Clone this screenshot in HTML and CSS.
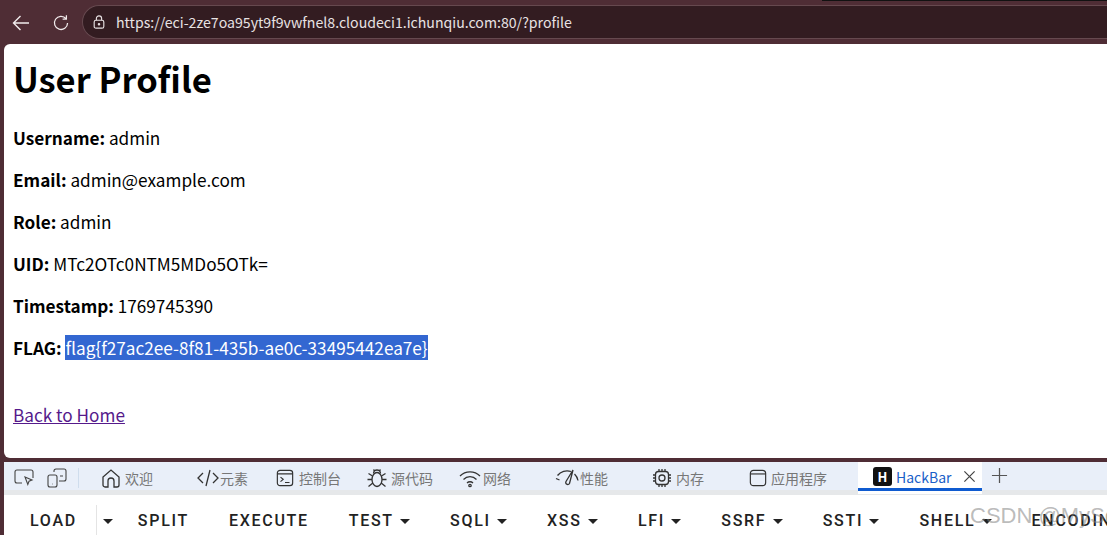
FILE: index.html
```html
<!DOCTYPE html>
<html lang="en">
<head>
<meta charset="UTF-8">
<title>User Profile</title>
<link rel="stylesheet" href="styles.css">
</head>
<body>
    <div class="topline"></div>
    <header class="toolbar">
        <svg class="nav-icon back" viewBox="0 0 20 20"><path d="M18 10H2.500M9.500 3l-7 7 7 7"/></svg>
        <svg class="nav-icon reload" viewBox="0 0 20 20"><path d="M15.600 5.200A7.300 7.300 0 1 0 17.300 10M16 1.500v4.200h-4.200"/></svg>
        <div class="address">
            <svg class="lock" viewBox="0 0 16 16"><rect x="2.500" y="6" width="11" height="9" rx="2"/><path d="M5 6V4a3 3 0 0 1 6 0v2"/><circle cx="8" cy="10.500" r=".8"/></svg>
            <span>https://eci-2ze7oa95yt9f9vwfnel8.cloudeci1.ichunqiu.com:80/?profile</span>
        </div>
    </header>

    <main class="page">
        <h1>User Profile</h1>
        <p><strong>Username:</strong> admin</p>
        <p><strong>Email:</strong> admin@example.com</p>
        <p><strong>Role:</strong> admin</p>
        <p><strong>UID:</strong> MTc2OTc0NTM5MDo5OTk=</p>
        <p><strong>Timestamp:</strong> 1769745390</p>
        <p><strong>FLAG:</strong> <span class="selected">flag{f27ac2ee-8f81-435b-ae0c-33495442ea7e}</span></p>
        <a class="home-link" href="#">Back to Home</a>
    </main>

    <section class="devtools">
        <nav class="tabs">
            <svg class="tool-icon inspect" viewBox="0 0 20 20"><path d="M8 15H3a2 2 0 0 1-2-2V4a2 2 0 0 1 2-2h14a2 2 0 0 1 2 2v6"/><path d="M11 9l7 3-3 1.200-1.200 3.300z"/></svg>
            <svg class="tool-icon device" viewBox="0 0 20 20"><path d="M7 4V3a2 2 0 0 1 2-2h8a2 2 0 0 1 2 2v8a2 2 0 0 1-2 2h-5"/><rect x="1" y="7" width="9" height="12" rx="2"/><path d="M13 8h3M5 16h.5"/></svg>
            <span class="tool-divider"></span>
            <div class="tab first">
                <svg viewBox="0 0 20 20"><path d="M7 19H4a2 2 0 0 1-2-2V9l8-7 8 7v8a2 2 0 0 1-2 2h-3v-6a3 3 0 0 0-6 0z"/></svg>欢迎
            </div>
            <div class="tab wide">
                <svg class="code" viewBox="0 0 22 20"><path d="M6 5l-5 5 5 5M16 5l5 5-5 5M13 2L9 18"/></svg>元素
            </div>
            <div class="tab console">
                <svg class="narrow" viewBox="0 0 20 20"><rect x="1.500" y="1.500" width="17" height="17" rx="3"/><path d="M1.500 5.500h17M5 9l3 2.500-3 2.500M10 15h5"/></svg>控制台
            </div>
            <div class="tab">
                <svg viewBox="0 0 20 20"><ellipse cx="10" cy="11.500" rx="5" ry="7"/><path d="M6.500 5.500a3.500 3.500 0 0 1 7 0M6.500 1.500l1.500 2M13.500 1.500l-1.500 2M5.500 8L1.500 5.500M14.500 8l4-2.500M5 11.500H.5M15 11.500h4.500M5.800 15L1.500 18.500M14.200 15l4.300 3.500"/></svg>源代码
            </div>
            <div class="tab">
                <svg class="wifi" viewBox="0 0 22 20"><path d="M1 8a14 14 0 0 1 20 0M4.500 11.500a9 9 0 0 1 13 0M8 15a4.200 4.200 0 0 1 6 0"/><circle cx="11" cy="17.500" r="1.200"/></svg>网络
            </div>
            <div class="tab wide">
                <svg class="gauge" viewBox="0 0 24 20"><path d="M1 10.500l3.500 1.500M2.500 7.500A12 12 0 0 1 16 3.500M19.500 6a12 12 0 0 1 3.500 6.500M18 2l-7 11.500a2 2 0 0 0 3.500 2z"/></svg>性能
            </div>
            <div class="tab wide">
                <svg viewBox="0 0 20 20"><rect x="3.500" y="3.500" width="13" height="13" rx="3"/><circle cx="10" cy="10" r="3"/><path d="M7 1v2.500M10 1v2.500M13 1v2.500M7 16.500V19M10 16.500V19M13 16.500V19M1 7h2.500M1 10h2.500M1 13h2.500M16.500 7H19M16.500 10H19M16.500 13H19"/></svg>内存
            </div>
            <div class="tab wide app">
                <svg class="narrow" viewBox="0 0 20 20"><rect x="1.500" y="1.500" width="17" height="17" rx="3.500"/><path d="M1.500 5.500h17"/></svg>应用程序
            </div>
            <div class="tab active">
                <span class="hb-logo">H</span>HackBar
                <svg class="close" viewBox="0 0 14 14"><path d="M1.500 1.500l11 11M12.500 1.500l-11 11"/></svg>
            </div>
            <svg class="plus" viewBox="0 0 18 18"><path d="M9 1v16M1 9h16"/></svg>
        </nav>

        <div class="hackbar">
            <button class="hb-btn load">Load</button>
            <button class="hb-btn caret-only"><i class="caret"></i></button>
            <button class="hb-btn">Split</button>
            <button class="hb-btn">Execute</button>
            <button class="hb-btn">Test<i class="caret"></i></button>
            <button class="hb-btn">SQLi<i class="caret"></i></button>
            <button class="hb-btn">XSS<i class="caret"></i></button>
            <button class="hb-btn">LFI<i class="caret"></i></button>
            <button class="hb-btn">SSRF<i class="caret"></i></button>
            <button class="hb-btn">SSTI<i class="caret"></i></button>
            <button class="hb-btn">Shell<i class="caret"></i></button>
            <button class="hb-btn">Encoding</button>
        </div>
    </section>

    <div class="watermark">CSDN @MySec</div>
</body>
</html>
```

FILE: styles.css
```css
body {
    margin: 0;
    width: 1107px;
    height: 535px;
    overflow: hidden;
    position: relative;
    background-color: #4f2d35;
    font-family: "Noto Sans CJK SC", "Noto Sans", sans-serif;
}

.topline {
    height: 1px;
    margin-left: 822px;
    background-color: #111;
}

/* browser toolbar */
.toolbar {
    height: 43px;
    display: flex;
    align-items: center;
}

.nav-icon {
    width: 20px;
    height: 20px;
    fill: none;
    stroke: #f1ebec;
    stroke-width: 1.4;
}

.back {
    margin-left: 11px;
}

.reload {
    margin-left: 21px;
    width: 18px;
    height: 18px;
}

.address {
    align-self: flex-start;
    margin-left: 12px;
    margin-top: 4px;
    flex: 1;
    height: 34px;
    display: flex;
    align-items: center;
    box-sizing: border-box;
    padding-left: 9px;
    background-color: #331c21;
    border: 1px solid #66494f;
    border-right: none;
    border-radius: 17px 0 0 17px;
    color: #e8e2e3;
    font-size: 14.13px;
}

.lock {
    width: 14px;
    height: 14px;
    margin-right: 10px;
    fill: none;
    stroke: #e8e2e3;
    stroke-width: 1.3;
}

/* page */
.page {
    height: 414px;
    margin-left: 4px;
    box-sizing: border-box;
    padding: 12px 9px;
    background-color: #fff;
    border-radius: 6px 0 0 6px;
    color: #000;
    font-size: 17.2px;
}

h1 {
    margin: 0 0 24px;
    font-size: 34.500px;
    line-height: 44px;
    font-weight: 700;
}

p {
    margin: 0;
    height: 42px;
    line-height: 27px;
}

.selected {
    background-color: #3367d1;
    color: #fff;
}

.home-link {
    display: inline-block;
    margin-top: 26px;
    color: #551a8b;
}

/* devtools */
.devtools {
    position: absolute;
    left: 4px;
    right: 0;
    top: 462px;
    bottom: 0;
    background-color: #fff;
}

.tabs {
    height: 24px;
    padding-top: 4px;
    display: flex;
    align-items: center;
    background-color: #e9eff9;
    border-bottom: 5px solid #e6e8ea;
    color: #777;
    font-size: 14px;
}

.tool-icon {
    width: 20px;
    height: 20px;
    fill: none;
    stroke: #444;
    stroke-width: 1.1;
}

.inspect {
    margin-left: 10px;
}

.device {
    margin-left: 13px;
}

.tool-divider {
    width: 1px;
    height: 20px;
    margin-left: 11px;
    background-color: #cfdded;
}

.tab {
    display: flex;
    align-items: center;
    margin-left: 26px;
    white-space: nowrap;
}

.tab.first {
    margin-left: 22px;
}

.tab.wide {
    margin-left: 44px;
}

.tab.console {
    margin-left: 28px;
}

.tab.app {
    margin-left: 45px;
}

.tab svg {
    width: 20px;
    height: 20px;
    margin-right: 4px;
    fill: none;
    stroke: #333;
    stroke-width: 1.3;
}

.tab svg.narrow {
    width: 18px;
    height: 18px;
}

.tab.console svg {
    margin-right: 5px;
}

.tab svg.code {
    width: 22px;
    margin-right: 1px;
}

.tab svg.wifi {
    width: 22px;
    margin-right: 2px;
}

.tab svg.gauge {
    width: 24px;
    margin-right: 1px;
}

.tab.active {
    align-self: flex-start;
    margin-top: -4px;
    margin-left: 31px;
    width: 124px;
    height: 29px;
    box-sizing: border-box;
    padding-left: 15px;
    padding-top: 3px;
    background-color: #fff;
    border-bottom: 3px solid #0f5bd0;
    box-shadow: 0 3px 0 #fff;
    color: #1a5fc8;
}

.hb-logo {
    width: 19px;
    height: 19px;
    margin-right: 4px;
    background-color: #111;
    border-radius: 3px;
    color: #fff;
    font-size: 13px;
    font-weight: 700;
    line-height: 19px;
    text-align: center;
}

.tab svg.close {
    width: 13px;
    height: 13px;
    margin: 0 0 0 12px;
    stroke: #444;
}

.plus {
    width: 17px;
    height: 17px;
    margin-left: 9px;
    margin-top: -6px;
    fill: none;
    stroke: #555;
    stroke-width: 1.3;
}

/* hackbar row */
.hackbar {
    display: flex;
    align-items: center;
    height: 40px;
    padding-top: 5px;
    overflow: hidden;
}

.hb-btn {
    flex-shrink: 0;
    height: 30px;
    padding: 0 20px;
    border: none;
    background: none;
    color: #222;
    font-family: Roboto, sans-serif;
    font-size: 16px;
    font-weight: 500;
    letter-spacing: 1.7px;
    text-transform: uppercase;
}

.hb-btn.load {
    padding: 0 19px 0 26px;
    border-right: 1px solid #e4e4e4;
}

.hb-btn.caret-only {
    padding: 0 5px 0 6px;
}

.caret {
    display: inline-block;
    width: 0;
    height: 0;
    margin-left: 6.3px;
    vertical-align: middle;
    border-left: 5px solid transparent;
    border-right: 5px solid transparent;
    border-top: 5px solid #222;
}

.caret-only .caret {
    margin-left: 0;
}

.watermark {
    position: absolute;
    left: 970px;
    top: 503px;
    white-space: nowrap;
    color: rgba(130, 130, 130, 0.55);
    font-family: "Liberation Sans", sans-serif;
    font-size: 22px;
}
```
